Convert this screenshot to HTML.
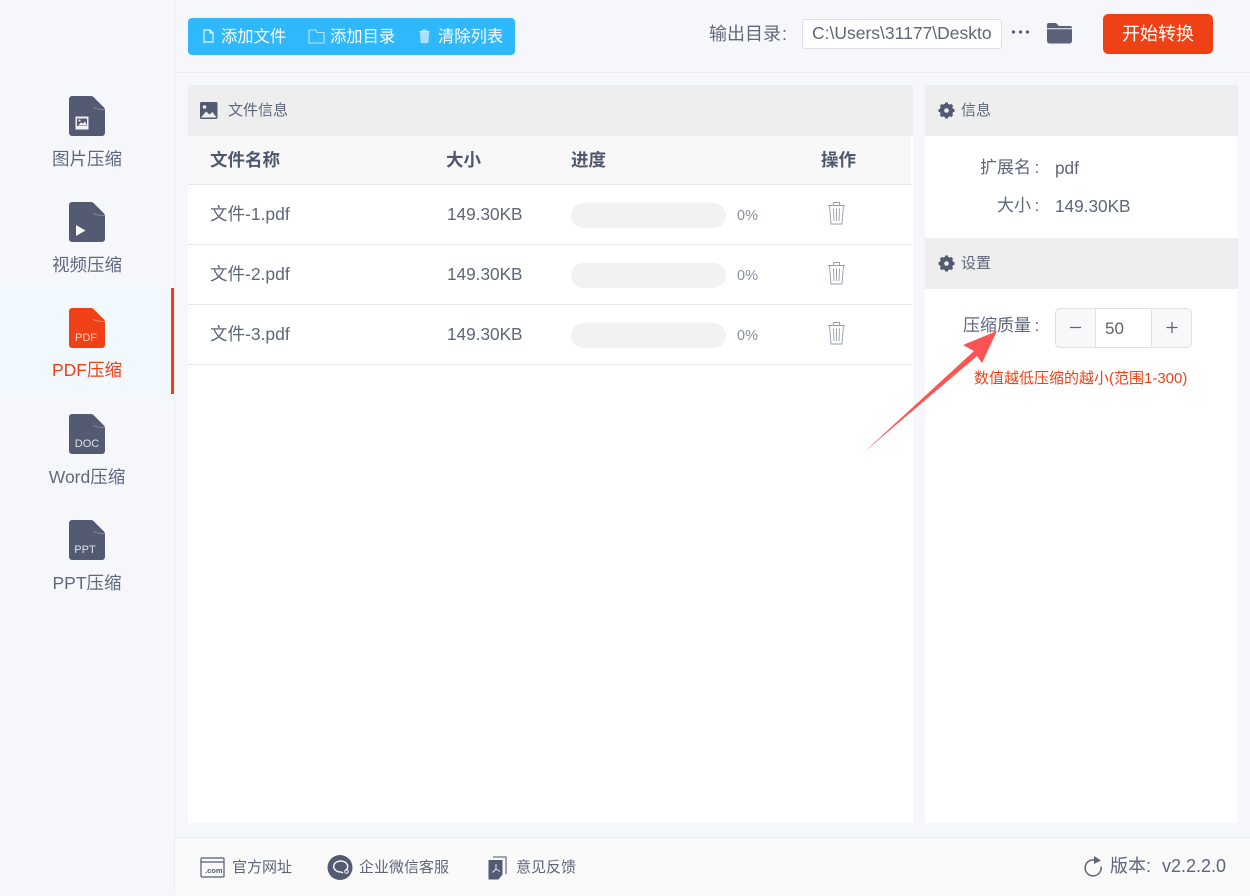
<!DOCTYPE html>
<html lang="zh"><head><meta charset="utf-8">
<style>
html,body{margin:0;padding:0}
body{width:1250px;height:895px;position:relative;overflow:hidden;background:#f5f7fa;color:#606880;font-family:"Liberation Sans","Noto Sans CJK SC",sans-serif;font-weight:400}
.a{position:absolute;white-space:nowrap}
.t{position:absolute;white-space:nowrap;line-height:24px}
svg{position:absolute;display:block}
.sb{font-size:17.5px;width:174px;text-align:center;left:0}
.h{font-weight:700;font-size:17.5px;color:#4f5670}
.c{font-size:17.5px;color:#5f6679}
.s{font-size:17.2px;color:#5f6679}
.p{font-size:14.5px;color:#8a8f9f}
.bar{position:absolute;left:571px;width:155px;height:25px;border-radius:13px;background:#f2f2f2}
.ln{position:absolute;left:188px;width:723px;height:1px;background:#e6e6e6}
.ic{font-size:11px;color:#dfe2ea;text-align:center;width:36px;left:69px;line-height:12px}
.w{color:#fff;font-size:16.3px}
.f{font-size:15px;color:#5f6679}
.k{margin-left:3.5px}
</style></head><body>

<!-- sidebar -->
<div class="a" style="left:174px;top:0;width:1px;height:895px;background:#eceef1"></div>
<div class="a" style="left:0;top:288px;width:171px;height:106px;background:#f1f9fe"></div>
<div class="a" style="left:171px;top:288px;width:3px;height:106px;background:#f04116"></div>

<svg style="left:69px;top:96px" width="36" height="40" viewBox="0 0 36 40"><path d="M3 0H22Q23.500 0 24.500 1L35 11.500Q36 12.500 36 14V37a3 3 0 0 1-3 3H3a3 3 0 0 1-3-3V3a3 3 0 0 1 3-3Z" fill="#535a72"/><path d="M24 11.500q5 2 12 2" stroke="#8c92a5" stroke-width=".8" fill="none"/><rect x="6.500" y="20.500" width="13" height="13" fill="#f1f2f5"/><rect x="8" y="22.500" width="10" height="7.500" fill="#535a72"/><path d="M9 29.500l3-3 2 1 2-2 2 4Z" fill="#f1f2f5"/><circle cx="10.500" cy="24.500" r="1" fill="#f1f2f5"/></svg>
<div class="t sb" style="top:147px">图片压缩</div>

<svg style="left:69px;top:202px" width="36" height="40" viewBox="0 0 36 40"><path d="M3 0H22Q23.500 0 24.500 1L35 11.500Q36 12.500 36 14V37a3 3 0 0 1-3 3H3a3 3 0 0 1-3-3V3a3 3 0 0 1 3-3Z" fill="#535a72"/><path d="M24 11.500q5 2 12 2" stroke="#8c92a5" stroke-width=".8" fill="none"/><path d="M7 23L16.500 28.500 7 34Z" fill="#fafbfc"/></svg>
<div class="t sb" style="top:253px">视频压缩</div>

<svg style="left:69px;top:308px" width="36" height="40" viewBox="0 0 36 40"><path d="M3 0H22Q23.500 0 24.500 1L35 11.500Q36 12.500 36 14V37a3 3 0 0 1-3 3H3a3 3 0 0 1-3-3V3a3 3 0 0 1 3-3Z" fill="#f04116"/><path d="M24 11.500q5 2 12 2" stroke="#f8a080" stroke-width=".8" fill="none"/></svg>
<div class="t ic" style="top:332px;left:68px;color:#fbd5c8">PDF</div>
<div class="t sb" style="top:358px;color:#f04116">PDF压缩</div>

<svg style="left:69px;top:414px" width="36" height="40" viewBox="0 0 36 40"><path d="M3 0H22Q23.500 0 24.500 1L35 11.500Q36 12.500 36 14V37a3 3 0 0 1-3 3H3a3 3 0 0 1-3-3V3a3 3 0 0 1 3-3Z" fill="#535a72"/><path d="M24 11.500q5 2 12 2" stroke="#8c92a5" stroke-width=".8" fill="none"/></svg>
<div class="t ic" style="top:438px;left:69px">DOC</div>
<div class="t sb" style="top:465px">Word压缩</div>

<svg style="left:69px;top:520px" width="36" height="40" viewBox="0 0 36 40"><path d="M3 0H22Q23.500 0 24.500 1L35 11.500Q36 12.500 36 14V37a3 3 0 0 1-3 3H3a3 3 0 0 1-3-3V3a3 3 0 0 1 3-3Z" fill="#535a72"/><path d="M24 11.500q5 2 12 2" stroke="#8c92a5" stroke-width=".8" fill="none"/></svg>
<div class="t ic" style="top:544px;left:67px">PPT</div>
<div class="t sb" style="top:571px">PPT压缩</div>

<!-- top bar -->
<div class="a" style="left:175px;top:72px;width:1075px;height:1px;background:#eceef1"></div>
<div class="a" style="left:188px;top:18px;width:327px;height:37px;background:#2fb8fb;border-radius:4px"></div>
<svg style="left:203px;top:29px" width="11" height="14" viewBox="0 0 11 14" fill="none" stroke="#e6f6ff" stroke-width="1.200"><path d="M1 1H7L10 4V13H1Z"/><path d="M7 1V4H10"/></svg>
<div class="t w" style="left:221px;top:25px">添加文件</div>
<svg style="left:308px;top:29px" width="17" height="15" viewBox="0 0 17 15" fill="none" stroke="#b5e6fd" stroke-width="1.100"><path d="M1 1H8L9 3.500H16V14H1Z"/></svg>
<div class="t w" style="left:330px;top:25px">添加目录</div>
<svg style="left:419px;top:29px" width="11" height="14" viewBox="0 0 11 14"><path d="M1.500 3.500H9.500L8.800 13.500H2.200Z" fill="#a8e0fc" stroke="#d5f0fe" stroke-width=".8"/><path d="M0.500 2.500H10.500M4 2.500V1H7V2.500" stroke="#d5f0fe" fill="none"/></svg>
<div class="t w" style="left:438px;top:25px">清除列表</div>

<div class="t" style="left:709px;top:22px;font-size:18px;color:#626978">输出目录<span style="margin-left:1px">:</span></div>
<div class="a" style="left:802px;top:19px;width:198px;height:28px;background:#fff;border:1px solid #dcdfe6;border-radius:3px"></div>
<div class="t" style="left:812px;top:21px;font-size:17.5px;color:#5f6679;width:180px;overflow:hidden">C:\Users\31177\Deskto</div>
<svg style="left:1011px;top:29px" width="19" height="6" viewBox="0 0 19 6" fill="#535a72"><circle cx="2.500" cy="3" r="1.600"/><circle cx="9.500" cy="3" r="1.600"/><circle cx="16.500" cy="3" r="1.600"/></svg>
<svg style="left:1047px;top:22px" width="25" height="22" viewBox="0 0 25 22" fill="#5a6178"><path d="M0 3a2 2 0 0 1 2-2H9l3 3H23a2 2 0 0 1 2 2V6.300H0Z"/><path d="M0 7.300H25V19a2.500 2.500 0 0 1-2.500 2.500H2.500A2.500 2.500 0 0 1 0 19Z"/></svg>
<div class="a" style="left:1103px;top:14px;width:110px;height:40px;background:#f04116;border-radius:5px"></div>
<div class="t" style="left:1103px;width:110px;text-align:center;top:22px;color:#fff;font-size:18px">开始转换</div>

<!-- file panel -->
<div class="a" style="left:188px;top:85px;width:725px;height:738px;background:#fff"></div>
<div class="a" style="left:188px;top:85px;width:725px;height:51px;background:#eeeeee"></div>
<svg style="left:200px;top:102px" width="18" height="17" viewBox="0 0 18 17"><rect width="17.500" height="17" rx="1.500" fill="#535a72"/><circle cx="4.500" cy="5" r="1.800" fill="#eee"/><path d="M1 15.500L6 9.500l3.500 3 3-2.500 4 5.500Z" fill="#eee"/></svg>
<div class="t" style="left:228px;top:98.500px;font-size:15px;color:#5f6679">文件信息</div>
<div class="a" style="left:188px;top:136px;width:723px;height:48px;background:#f8f8f8"></div>
<div class="ln" style="top:184px"></div>
<div class="ln" style="top:244px"></div>
<div class="ln" style="top:304px"></div>
<div class="ln" style="top:364px"></div>

<div class="t h" style="left:210px;top:148px">文件名称</div>
<div class="t h" style="left:446px;top:148px">大小</div>
<div class="t h" style="left:571px;top:148px">进度</div>
<div class="t h" style="left:821px;top:148px">操作</div>

<div class="t c" style="left:210px;top:202px">文件-1.pdf</div>
<div class="t s" style="left:447px;top:202px">149.30KB</div>
<div class="bar" style="top:203px"></div>
<div class="t p" style="left:737px;top:204px">0%</div>
<svg style="left:827px;top:201px" width="19" height="24" viewBox="0 0 19 24" fill="none" stroke="#979cad" stroke-width=".9"><path d="M1 4.500H18M6.500 4.500V1.500H12.500V4.500M2.500 4.500L4 23H15L16.500 4.500M6.500 7.500L7 20M9.500 7.500V20M12.500 7.500L12 20"/></svg>

<div class="t c" style="left:210px;top:262px">文件-2.pdf</div>
<div class="t s" style="left:447px;top:262px">149.30KB</div>
<div class="bar" style="top:263px"></div>
<div class="t p" style="left:737px;top:264px">0%</div>
<svg style="left:827px;top:261px" width="19" height="24" viewBox="0 0 19 24" fill="none" stroke="#979cad" stroke-width=".9"><path d="M1 4.500H18M6.500 4.500V1.500H12.500V4.500M2.500 4.500L4 23H15L16.500 4.500M6.500 7.500L7 20M9.500 7.500V20M12.500 7.500L12 20"/></svg>

<div class="t c" style="left:210px;top:322px">文件-3.pdf</div>
<div class="t s" style="left:447px;top:322px">149.30KB</div>
<div class="bar" style="top:323px"></div>
<div class="t p" style="left:737px;top:324px">0%</div>
<svg style="left:827px;top:321px" width="19" height="24" viewBox="0 0 19 24" fill="none" stroke="#979cad" stroke-width=".9"><path d="M1 4.500H18M6.500 4.500V1.500H12.500V4.500M2.500 4.500L4 23H15L16.500 4.500M6.500 7.500L7 20M9.500 7.500V20M12.500 7.500L12 20"/></svg>

<!-- right panel -->
<div class="a" style="left:925px;top:85px;width:313px;height:738px;background:#fff"></div>
<div class="a" style="left:925px;top:85px;width:313px;height:51px;background:#eeeeee"></div>
<div class="a" style="left:925px;top:238px;width:313px;height:51px;background:#eeeeee"></div>
<svg style="left:938px;top:101.500px" width="17" height="17" viewBox="0 0 17 17"><circle cx="8.500" cy="8.500" r="5" fill="none" stroke="#535a72" stroke-width="3.500"/><path d="M8.500 0.500V16.500M0.500 8.500H16.500M2.800 2.800L14.200 14.200M14.200 2.800L2.800 14.200" stroke="#535a72" stroke-width="3"/><circle cx="8.500" cy="8.500" r="2.300" fill="#eee"/></svg>
<div class="t" style="left:961px;top:98.500px;font-size:15px;color:#5f6679">信息</div>
<svg style="left:938px;top:254.500px" width="17" height="17" viewBox="0 0 17 17"><circle cx="8.500" cy="8.500" r="5" fill="none" stroke="#535a72" stroke-width="3.500"/><path d="M8.500 0.500V16.500M0.500 8.500H16.500M2.800 2.800L14.200 14.200M14.200 2.800L2.800 14.200" stroke="#535a72" stroke-width="3"/><circle cx="8.500" cy="8.500" r="2.300" fill="#eee"/></svg>
<div class="t" style="left:961px;top:251.500px;font-size:15px;color:#5f6679">设置</div>

<div class="t" style="left:980px;top:156px;font-size:17px;color:#5f6679">扩展名<span class="k">:</span></div>
<div class="t" style="left:1055px;top:156px;font-size:17.2px;color:#5f6679">pdf</div>
<div class="t" style="left:997px;top:194px;font-size:17px;color:#5f6679">大小<span class="k">:</span></div>
<div class="t" style="left:1055px;top:194px;font-size:17.2px;color:#5f6679">149.30KB</div>

<div class="t" style="left:963px;top:314px;font-size:17px;color:#5f6679">压缩质量<span class="k">:</span></div>
<div class="a" style="left:1055px;top:308px;width:135px;height:38px;border:1px solid #e0e2e8;border-radius:5px;background:#f7f8fa;overflow:hidden"><div class="a" style="left:39px;top:0;width:55px;height:38px;background:#fff;border-left:1px solid #e0e2e8;border-right:1px solid #e0e2e8"></div></div>
<svg style="left:1066px;top:318px" width="116" height="20" viewBox="0 0 116 20" stroke="#5f6679" stroke-width="1.300" fill="none"><path d="M4 9.500H15M100.500 9.500H111.500M106 4V15"/></svg>
<div class="t" style="left:1105px;top:317px;font-size:17px;color:#606266">50</div>
<div class="t" style="left:974px;top:367px;font-size:15px;color:#f04116">数值越低压缩的越小(范围1-300)</div>

<!-- red arrow -->
<svg style="left:860px;top:325px" width="140" height="130" viewBox="0 0 140 130"><path d="M3 128L114 26 103 20 137 6 122 38 117 31Z" fill="#fd5353"/></svg>

<!-- footer -->
<div class="a" style="left:175px;top:837px;width:1075px;height:58px;background:#fafafa;border-top:1px solid #eceef1"></div>
<svg style="left:200px;top:857px" width="25" height="21" viewBox="0 0 25 21" fill="none" stroke="#535a72" stroke-width="1.200"><rect x="1" y="1" width="23" height="19" rx="1"/><path d="M1 5H24"/></svg>
<div class="t" style="left:205px;top:866px;font-size:7.5px;line-height:10px;color:#535a72;font-weight:700">.com</div>
<div class="t f" style="left:232px;top:856px">官方网址</div>
<svg style="left:327px;top:855px" width="26" height="25" viewBox="0 0 26 25"><circle cx="13" cy="12.500" r="12.500" fill="#535a72"/><path d="M18.500 15.500A7 5.500 0 1 0 14 17L16 18" fill="none" stroke="#f5f6f8" stroke-width="1.500"/><circle cx="19.500" cy="16.500" r="1.800" fill="none" stroke="#f5f6f8"/></svg>
<div class="t f" style="left:359px;top:856px">企业微信客服</div>
<svg style="left:488px;top:856px" width="20" height="24" viewBox="0 0 20 24"><path d="M5 1H18V18" fill="none" stroke="#6c7288" stroke-width="1.300"/><path d="M0.500 4H14.500V18.500L10.500 23.500H0.500Z" fill="#535a72"/><path d="M8 8V13L4.500 16.500M8 13L12 15.500" stroke="#eef" fill="none"/></svg>
<div class="t f" style="left:516px;top:856px">意见反馈</div>
<svg style="left:1083px;top:856px" width="20" height="21" viewBox="0 0 20 21" fill="none"><path d="M11.500 4A8 8 0 1 0 18 10.500" stroke="#5f6679" stroke-width="1.500"/><path d="M11 0L18 4.500 11 8Z" fill="#5f6679"/></svg>
<div class="t" style="left:1110px;top:854px;font-size:18px;color:#5f6679">版本:<span style="margin-left:6px"> v2.2.2.0</span></div>
</body></html>
